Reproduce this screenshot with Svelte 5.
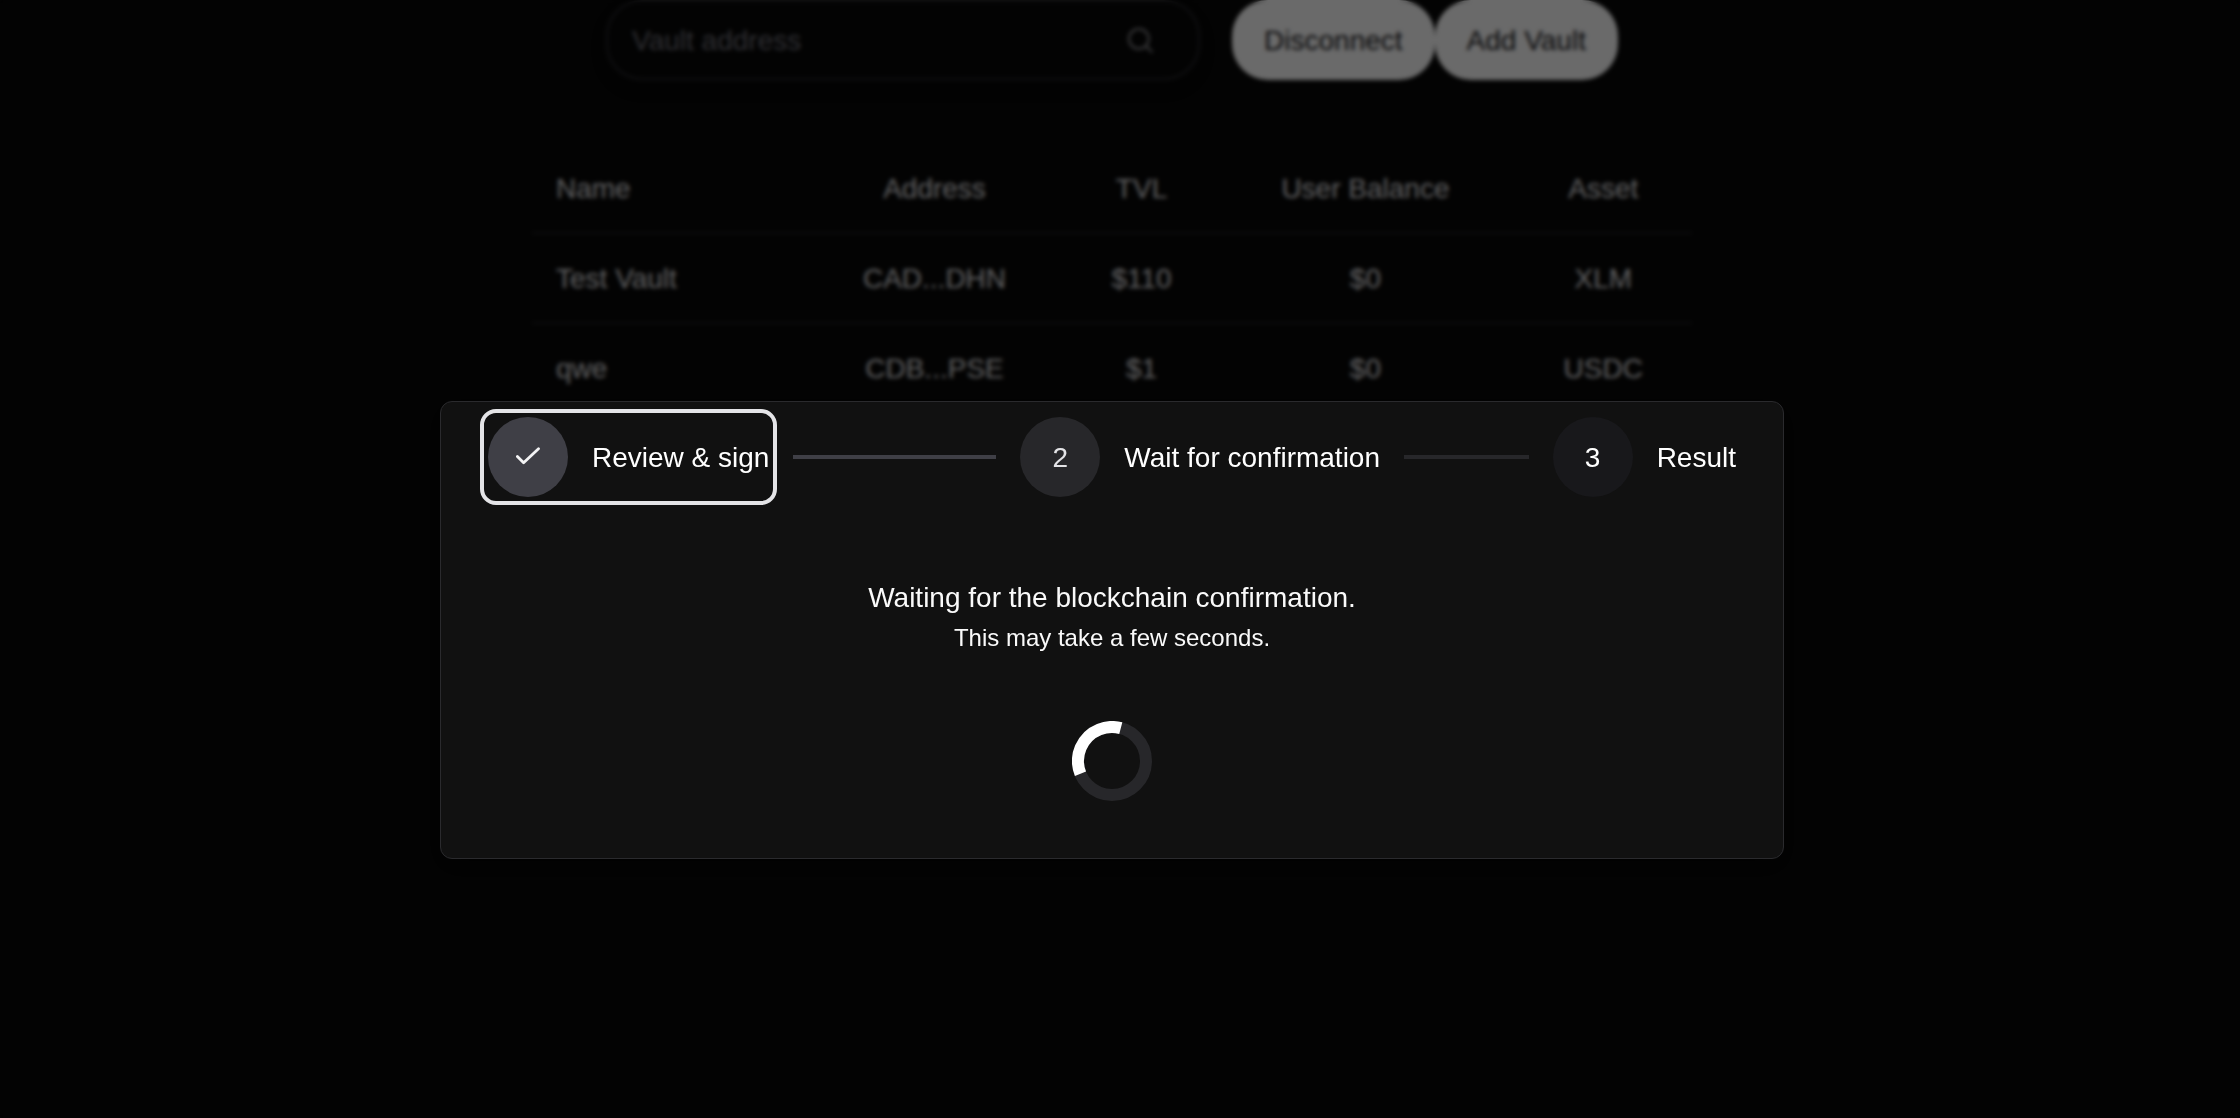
<script>
  const vaults = [
    { name: 'Test Vault', address: 'CAD...DHN', tvl: '$110', balance: '$0', asset: 'XLM' },
    { name: 'qwe', address: 'CDB...PSE', tvl: '$1', balance: '$0', asset: 'USDC' }
  ];
  const steps = [
    { label: 'Review & sign', state: 'complete' },
    { label: 'Wait for confirmation', state: 'current' },
    { label: 'Result', state: 'upcoming' }
  ];
  let query = $state('');
</script>

<main class="page">
  <div class="toolbar">
    <div class="search">
      <input type="text" aria-label="Vault address" placeholder="Vault address" bind:value={query} />
      <button class="search-button" type="button" aria-label="Search">
        <svg viewBox="0 0 24 24" width="28" height="28" fill="none" stroke="currentColor" stroke-width="2" stroke-linecap="round" stroke-linejoin="round">
          <circle cx="11" cy="11" r="8.5" />
          <path d="M17.2 17.2L22 22" />
        </svg>
      </button>
    </div>
    <div class="actions">
      <button class="pill" type="button">Disconnect</button>
      <button class="pill" type="button">Add Vault</button>
    </div>
  </div>

  <table class="vaults">
    <colgroup>
      <col class="c-name" /><col class="c-address" /><col class="c-tvl" /><col class="c-balance" /><col class="c-asset" />
    </colgroup>
    <thead>
      <tr><th>Name</th><th>Address</th><th>TVL</th><th>User Balance</th><th>Asset</th></tr>
    </thead>
    <tbody>
      {#each vaults as v}
        <tr><td>{v.name}</td><td>{v.address}</td><td>{v.tvl}</td><td>{v.balance}</td><td>{v.asset}</td></tr>
      {/each}
    </tbody>
  </table>
</main>

<div class="overlay">
  <div class="modal" role="dialog" aria-modal="true" aria-label="Transaction progress">
    <ol class="stepper">
      {#each steps as step, i}
        <li class="step {step.state}">
          <button type="button" class="step-button" class:focused={i === 0}>
            <span class="marker">
              {#if step.state === 'complete'}
                <svg viewBox="0 0 24 24" width="24" height="24" fill="none" stroke="currentColor" stroke-width="2.8" stroke-linecap="round" stroke-linejoin="round">
                  <path d="M1.4 11.5L7.6 17.7L22.5 3.8" />
                </svg>
              {:else}
                {i + 1}
              {/if}
            </span>
            <span class="label">{step.label}</span>
          </button>
          {#if i < steps.length - 1}
            <span class="connector"></span>
          {/if}
        </li>
      {/each}
    </ol>

    <div class="status" role="status">
      <p class="title">Waiting for the blockchain confirmation.</p>
      <p class="hint">This may take a few seconds.</p>
      <svg class="spinner" viewBox="0 0 80 80" width="80" height="80" fill="none" stroke-width="12" aria-hidden="true">
        <circle cx="40" cy="40" r="34" stroke="#27272a" />
        <circle cx="40" cy="40" r="34" stroke="#ffffff" pathLength="360" stroke-dasharray="127 233" transform="rotate(158 40 40)" />
      </svg>
    </div>
  </div>
</div>

<style>
  :global(body) {
    background: #080808;
    overflow: hidden;
  }

  .page,
  .overlay {
    box-sizing: border-box;
    min-height: 100vh;
    padding-right: 16px;
    font-family: 'Liberation Sans', Arial, Helvetica, sans-serif;
    font-size: 28px;
    line-height: 41px;
    color: #fafafa;
  }

  button,
  input {
    font: inherit;
    color: inherit;
    background: none;
    border: 0;
    padding: 0;
    margin: 0;
  }

  .page {
    display: flex;
    flex-direction: column;
    align-items: center;
    gap: 64px;
  }

  .toolbar {
    display: flex;
    gap: 32px;
  }

  .search {
    box-sizing: border-box;
    display: flex;
    align-items: center;
    width: 594px;
    height: 80px;
    padding: 0 44px 0 24px;
    border: 2px solid #27272a;
    border-radius: 36px;
    box-shadow: 0 8px 16px rgba(0, 0, 0, 0.2);
  }

  .search input {
    flex: 1;
    min-width: 0;
    outline: none;
  }

  .search input::placeholder {
    color: #71717a;
    opacity: 1;
  }

  .search-button {
    display: flex;
    color: #808084;
  }

  .actions {
    display: flex;
  }

  .pill {
    height: 80px;
    padding: 0 32px;
    border-radius: 36px;
    background: #fcfcfc;
    color: #18181b;
  }

  .vaults {
    width: 100%;
    max-width: 1160px;
    table-layout: fixed;
    border-collapse: separate;
    border-spacing: 0;
    text-align: center;
    color: #e4e4e7;
  }

  .c-name { width: 23.3%; }
  .c-address { width: 22.8%; }
  .c-tvl { width: 12.9%; }
  .c-balance { width: 25.7%; }
  .c-asset { width: 15.3%; }

  .vaults th,
  .vaults td {
    height: 88px;
    padding: 0 24px;
    border-bottom: 2px solid #1f1f22;
    font-weight: 400;
    white-space: nowrap;
  }

  .vaults th:first-child,
  .vaults td:first-child {
    text-align: left;
  }

  .overlay {
    position: fixed;
    inset: 0;
    display: flex;
    justify-content: center;
    align-items: flex-start;
    padding-top: 401px;
    background: rgba(0, 0, 0, 0.58);
    backdrop-filter: blur(2px);
  }

  .modal {
    box-sizing: border-box;
    width: 100%;
    max-width: 1344px;
    padding: 15px 47px 57px;
    border: 1px solid #2a2a2d;
    border-radius: 12px;
    background: #111111;
    box-shadow: 0 8px 24px rgba(0, 0, 0, 0.6);
  }

  .stepper {
    display: grid;
    grid-template-columns: 1fr 1fr auto;
    margin: 0;
    padding: 0;
    list-style: none;
  }

  .step {
    display: flex;
    align-items: center;
  }

  .step-button {
    display: flex;
    align-items: center;
    gap: 24px;
    border-radius: 8px;
    white-space: nowrap;
    color: #ffffff;
  }

  .focused {
    outline: 4px solid #e4e4e7;
    outline-offset: 4px;
  }

  .marker {
    display: grid;
    place-items: center;
    width: 80px;
    height: 80px;
    border-radius: 50%;
    background: #18181b;
  }

  .complete .marker {
    background: #3f3f46;
    color: #f4f4f5;
  }

  .current .marker {
    background: #27272a;
    color: #e4e4e7;
  }

  .connector {
    flex: 1;
    height: 4px;
    margin: 0 24px;
    background: #27272a;
  }

  .complete .connector {
    background: #3f3f46;
  }

  .status {
    display: flex;
    flex-direction: column;
    align-items: center;
    padding-top: 80px;
  }

  .status p {
    margin: 0;
  }

  .hint {
    font-size: 24px;
    line-height: 39px;
  }

  .spinner {
    margin-top: 64px;
  }
</style>
